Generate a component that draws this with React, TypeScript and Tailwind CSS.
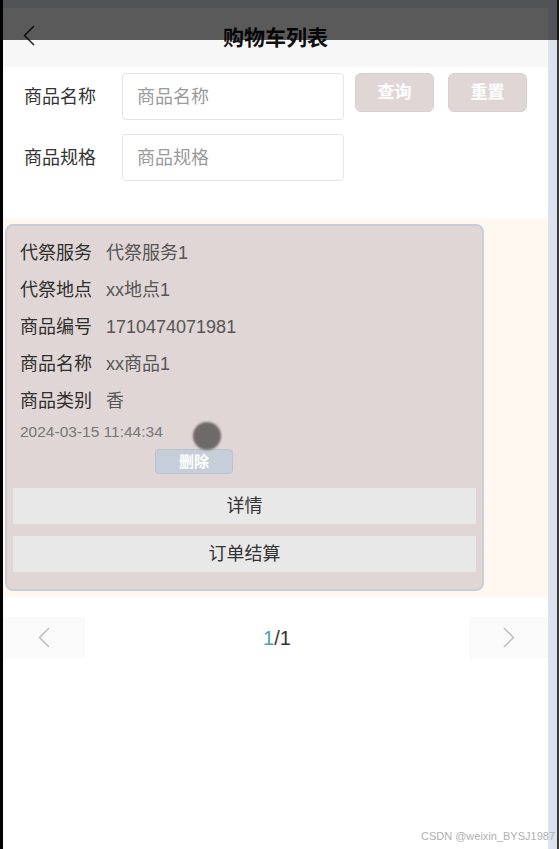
import React from "react";

const font = "font-['Liberation_Sans','Noto_Sans_CJK_SC',sans-serif]";

const rows = [
  { label: "代祭服务", value: "代祭服务1" },
  { label: "代祭地点", value: "xx地点1" },
  { label: "商品编号", value: "1710474071981" },
  { label: "商品名称", value: "xx商品1" },
  { label: "商品类别", value: "香" },
];

function Chevron({ dir, className }: { dir: "left" | "right"; className?: string }) {
  return (
    <svg width="12" height="21" viewBox="0 0 12 21" fill="none" className={className}>
      <path
        d={dir === "left" ? "M11 1 L1.5 10.5 L11 20" : "M1 1 L10.5 10.5 L1 20"}
        stroke="currentColor"
        strokeWidth="1.5"
        strokeLinejoin="miter"
      />
    </svg>
  );
}

function SearchRow({ label, withButtons }: { label: string; withButtons?: boolean }) {
  return (
    <div className="flex items-start">
      <div className="flex h-[47px] w-[119px] items-center pl-[21px] text-[18px] leading-none text-[#333]">
        {label}
      </div>
      <div className="flex h-[47px] w-[222px] items-center rounded-[4px] border border-[#e4e4e4] bg-white px-[14px] text-[18px] leading-none text-[#9a9a9a]">
        {label}
      </div>
      {withButtons && (
        <div className="ml-[11px] flex gap-[14px]">
          <button className="h-[39px] w-[79px] rounded-[6px] border border-[#d9cfce] bg-[#e0d6d5] text-[17px] font-semibold leading-none text-white">
            查询
          </button>
          <button className="h-[39px] w-[79px] rounded-[6px] border border-[#d9cfce] bg-[#e0d6d5] text-[17px] font-semibold leading-none text-white">
            重置
          </button>
        </div>
      )}
    </div>
  );
}

export default function App() {
  return (
    <div className={`relative flex h-[849px] w-[559px] overflow-hidden bg-[#dde3ee] ${font}`}>
      <div className="w-[3px] bg-black" />

      <div className="mt-[8px] flex w-[545px] flex-col bg-white">
        {/* Titre */}
        <div className="relative flex h-[59px] items-center justify-center bg-[#f7f7f7]">
          <Chevron dir="left" className="absolute left-[20px] top-[17px] text-[#222]" />
          <span className="text-[21px] font-bold leading-none text-[#111]">购物车列表</span>
        </div>

        {/* Recherche */}
        <div className="mt-[6px] flex flex-col gap-[14px]">
          <SearchRow label="商品名称" withButtons />
          <SearchRow label="商品规格" />
        </div>

        {/* Liste */}
        <div className="mt-[37px] bg-[#fff8f1] py-[6px] pl-[2px]">
          <div className="relative w-[479px] rounded-[8px] border-2 border-[#c8cdd8] bg-[#e0d6d5] pb-[17px] pt-[8px]">
            {rows.map((r) => (
              <div key={r.label} className="flex h-[37px] items-center pl-[13px] text-[18px] leading-none">
                <span className="w-[86px] text-[#2e2e2e]">{r.label}</span>
                <span className="text-[#555]">{r.value}</span>
              </div>
            ))}
            <div className="flex h-[26px] items-center pl-[13px] text-[15.5px] leading-none text-[#777]">
              2024-03-15 11:44:34
            </div>
            <div className="absolute left-[186px] top-[196px] h-[28px] w-[28px] rounded-full bg-[#6f6969] blur-[1px]" />
            <button className="ml-[148px] mt-[4px] h-[25px] w-[78px] rounded-[4px] border border-[#b9c3cf] bg-[#c6ced9] text-[15px] font-semibold leading-none text-white">
              删除
            </button>
            <div className="mt-[14px] flex flex-col gap-[12px] px-[6px]">
              <button className="h-[36px] w-full bg-[#e8e8e8] text-[18px] leading-none text-[#333]">详情</button>
              <button className="h-[36px] w-full bg-[#e8e8e8] text-[18px] leading-none text-[#333]">订单结算</button>
            </div>
          </div>
        </div>

        {/* Pagination */}
        <div className="mt-[20px] flex h-[41px] items-center justify-between">
          <div className="flex h-full w-[82px] items-center justify-center bg-[#fafafa] text-[#bdbdbd]">
            <Chevron dir="left" />
          </div>
          <div className="text-[20px] leading-none">
            <span className="text-[#4aa3b5]">1</span>
            <span className="text-[#333]">/1</span>
          </div>
          <div className="flex h-full w-[79px] items-center justify-center bg-[#fafafa] text-[#bdbdbd]">
            <Chevron dir="right" />
          </div>
        </div>
      </div>

      <div className="w-[9px] bg-[#dde3ee]" />
      <div className="w-[2px] bg-[#3a3a3a]" />

      {/* voile sombre en haut */}
      <div className="absolute inset-x-0 top-0 h-[40px] bg-black/[0.635]" />

      <div className="absolute bottom-[7px] right-[4px] text-[11px] leading-none text-[#b0b0b0]">
        CSDN @weixin_BYSJ1987
      </div>
    </div>
  );
}
